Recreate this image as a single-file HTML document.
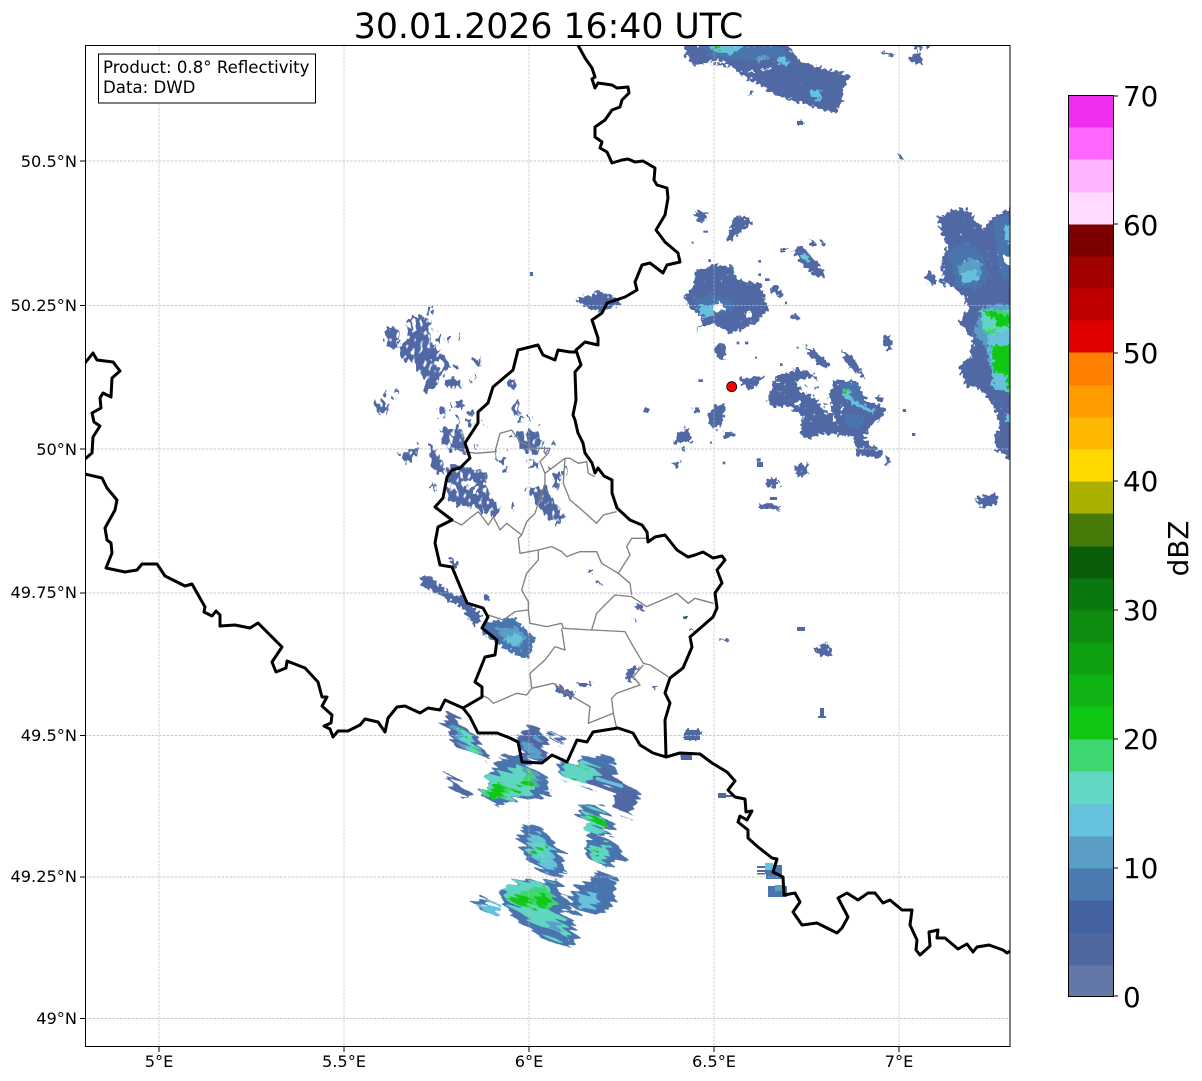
<!DOCTYPE html>
<html><head><meta charset="utf-8"><style>
html,body{margin:0;padding:0;background:#fff}
svg{display:block}
text{font-family:"DejaVu Sans",sans-serif;fill:#000}
.b{fill:#5068a3}.m{fill:#4a74ae}.l{fill:#5a9ec6}.c{fill:#66c2dc}.t{fill:#60d6c2}.g{fill:#3ed66e}.G{fill:#10c814}.w{fill:#fff}
.s{stroke:#5068a3;fill:none}
</style></head><body>
<svg xmlns="http://www.w3.org/2000/svg" width="1202" height="1081" viewBox="0 0 1202 1081">
<rect width="1202" height="1081" fill="#fff"/>
<defs>
<clipPath id="ax"><rect x="85.5" y="45.5" width="924.5" height="1001"/></clipPath>
<filter id="rough" filterUnits="userSpaceOnUse" x="0" y="0" width="1202" height="1081" color-interpolation-filters="sRGB">
<feTurbulence type="fractalNoise" baseFrequency=".3" numOctaves="1" seed="4" result="n"/>
<feDisplacementMap in="SourceGraphic" in2="n" scale="10" xChannelSelector="R" yChannelSelector="G" result="d"/>
<feColorMatrix in="n" type="matrix" values="0 0 0 0 0 0 0 0 0 0 0 0 0 0 0 8 0 0 0 -1.2" result="a"/>
<feComposite in="d" in2="a" operator="in"/>
</filter>
<filter id="scatter" filterUnits="userSpaceOnUse" x="0" y="0" width="1202" height="1081" color-interpolation-filters="sRGB">
<feTurbulence type="fractalNoise" baseFrequency=".25 .16" numOctaves="1" seed="9" result="n"/>
<feDisplacementMap in="SourceGraphic" in2="n" scale="14" xChannelSelector="R" yChannelSelector="G" result="d"/>
<feColorMatrix in="n" type="matrix" values="0 0 0 0 0 0 0 0 0 0 0 0 0 0 0 9 0 0 0 -2.8" result="a"/>
<feComposite in="d" in2="a" operator="in"/>
</filter>
<filter id="streak" filterUnits="userSpaceOnUse" x="-600" y="-600" width="2600" height="2600" color-interpolation-filters="sRGB">
<feTurbulence type="fractalNoise" baseFrequency=".025 .28" numOctaves="1" seed="3" result="n"/>
<feDisplacementMap in="SourceGraphic" in2="n" scale="22" xChannelSelector="R" yChannelSelector="A"/>
</filter>
</defs>
<g clip-path="url(#ax)">

<!-- top swath -->
<g filter="url(#rough)">
<g transform="translate(680,40) scale(.3333)">
<polygon class="b" points="15,15 320,15 370,70 515,105 490,145 485,185 470,220 310,175 210,120 150,80 90,70 40,75 15,45"/>
<polygon class="m" points="60,15 300,15 340,70 270,60 180,60 90,50"/>
<polygon class="c" points="85,15 190,15 155,45 100,30"/><polygon class="c" points="300,50 330,65 320,80 290,65"/><polygon class="l" points="225,55 260,40 265,55 235,70"/>
<polygon class="c" points="390,150 420,150 420,185 390,170"/><polygon class="G" points="100,15 120,15 120,28 100,25"/>
<rect x="355" y="244" width="13" height="11" class="b"/>
<polygon class="b" points="605,35 645,45 640,55 608,40"/><polygon class="b" points="690,50 715,40 730,60 715,75 685,60"/><polygon class="b" points="695,15 725,15 715,35"/><polygon class="b" points="735,15 750,15 745,25"/>
<rect x="205" y="160" width="14" height="4" class="b"/>
<rect x="85" y="63" width="50" height="6" class="w"/><rect x="240" y="85" width="32" height="4" class="w"/><rect x="205" y="90" width="20" height="5" class="w"/>
</g>
</g>
<rect x="797" y="121" width="6" height="4" class="b"/>
<polygon class="b" points="897,153 901,155 904,160 900,159"/>

<!-- north-centre / east radar cells -->
<g filter="url(#rough)">
<polygon class="b" points="575,300 585,296 600,292 612,296 622,302 612,307 600,312 585,307"/>
<g transform="translate(660,200) scale(.3333)">
<polygon class="b" points="70,295 100,260 105,210 170,195 220,200 235,240 300,250 325,325 290,370 210,400 170,375 130,375 110,395 130,355 100,335"/>
<polygon class="m" points="100,300 150,280 220,300 225,320 190,340 150,350 120,345"/>
<polygon class="c" points="110,325 150,310 170,330 150,350 130,350"/>
<polygon class="w" points="160,320 180,305 195,330 165,335"/><circle cx="265" cy="345" r="8" class="w"/>
<polygon class="b" points="200,120 215,65 235,45 280,65 250,85 215,125"/><polygon class="b" points="105,35 145,35 135,70 110,60"/>
<polygon class="b" points="400,150 425,135 490,210 495,235 460,225 420,185"/><polygon class="c" points="420,160 445,165 445,190 425,175"/><circle cx="435" cy="172" r="5" class="t"/>
<polygon class="b" points="450,115 470,130 460,145 450,130"/><polygon class="b" points="475,112 497,130 490,138"/>
<polygon class="b" points="330,270 345,250 368,285 360,295"/><rect x="365" y="147" width="14" height="8" class="b"/>
<polygon class="b" points="395,345 405,342 422,358 400,360"/>
<polygon class="b" points="160,455 175,428 195,440 195,485 175,475"/>
<polygon class="b" points="320,600 345,530 410,505 465,525 500,600 525,540 590,545 620,600 680,625 670,650 630,680 610,720 670,760 660,775 590,765 580,710 490,700 440,720 420,700 430,650 390,620 340,620"/>
<polygon class="w" points="410,540 460,530 510,590 520,640 500,640 460,590 420,570"/>
<circle cx="415" cy="612" r="8" class="w"/>
<g class="w"><rect x="350" y="540" width="8" height="8"/><rect x="380" y="515" width="8" height="8"/><rect x="520" y="650" width="8" height="8"/><rect x="540" y="620" width="10" height="8"/><rect x="360" y="570" width="6" height="6"/><rect x="630" y="700" width="8" height="8"/><rect x="600" y="740" width="10" height="6"/></g>
<g class="b"><rect x="435" y="555" width="6" height="6"/><rect x="465" y="560" width="6" height="6"/><rect x="490" y="610" width="6" height="6"/><rect x="470" y="600" width="6" height="6"/><rect x="510" y="610" width="5" height="5"/><rect x="520" y="590" width="5" height="5"/></g>
<polygon class="m" points="550,640 620,650 600,690 560,680"/>
<polygon class="m" points="530,550 590,545 600,590 620,600 600,610 560,590"/>
<polygon class="c" points="548,565 570,570 575,595 610,615 650,630 640,640 590,620 550,590"/><circle cx="557" cy="575" r="5" class="G"/>
<polygon class="b" points="545,450 580,470 615,535 590,520 560,490"/><polygon class="b" points="435,435 460,450 515,495 490,505 450,470"/>
<polygon class="b" points="140,650 165,615 195,610 190,660 170,690 145,670"/>
<polygon class="b" points="235,535 310,530 290,560 270,570 245,550"/>
<polygon class="b" points="670,420 680,405 697,430 690,450 675,440"/>
<polygon class="b" points="190,690 225,700 215,715 190,710"/><polygon class="b" points="72,680 95,720 70,725"/><polygon class="b" points="40,722 60,716 55,735 45,735"/><polygon class="b" points="30,790 60,785 50,805"/>
<polygon class="b" points="405,800 440,795 440,810 405,810"/><polygon class="b" points="675,785 690,785 685,800"/>
<polygon class="b" points="648,590 670,590 672,600 650,600"/><polygon class="b" points="100,630 120,620 115,645"/>
<polygon class="b" points="60,745 75,742 72,755"/>
</g>
<polygon points="678,432 688,428 692,442 676,442" class="b"/>
<polygon points="796,466 806,463 809,473 802,478 796,474" class="b"/>
<polygon points="884,337 890,334 893,349 887,351" class="b"/>
<polygon points="765,480 778,478 780,485 767,488" class="b"/><polygon points="758,503 778,505 780,510 760,508" class="b"/>
<polygon points="976,497 996,494 998,503 985,507 977,505" class="b"/>
<polygon points="814,650 828,642 832,656 818,655" class="b"/>
<polygon points="912,58 920,52 922,62 915,66" class="b"/>
</g>
<g transform="translate(660,200) scale(.3333)" class="b"><rect x="145" y="178" width="8" height="8"/><rect x="95" y="125" width="6" height="6"/><rect x="295" y="180" width="8" height="8"/><rect x="375" y="305" width="6" height="8"/><rect x="290" y="775" width="12" height="10"/><rect x="230" y="425" width="8" height="8"/><rect x="255" y="425" width="10" height="8"/><rect x="285" y="470" width="6" height="6"/><rect x="115" y="538" width="14" height="8"/><rect x="150" y="725" width="6" height="6"/><rect x="188" y="785" width="8" height="8"/><rect x="410" y="440" width="6" height="6"/><rect x="360" y="490" width="8" height="8"/><rect x="295" y="220" width="8" height="8"/><rect x="315" y="235" width="14" height="8"/><rect x="130" y="92" width="14" height="6"/></g>

<!-- small scattered cells -->
<g class="b">
<rect x="530" y="272" width="3" height="4"/>
<polygon points="645,407 650,409 648,413 643,412"/>
<rect x="757" y="462" width="6" height="5"/><rect x="770" y="497" width="7" height="3"/>
<polygon points="686,730 700,730 700,740 684,740"/>
<polygon points="680,753 692,752 692,760 681,760"/>
<polygon points="718,793 726,793 726,795 733,795 733,797 726,797 726,798 718,798"/>
<rect x="797" y="627" width="8" height="4"/>
<rect x="820" y="708" width="4" height="8"/><rect x="818" y="716" width="8" height="2"/>
<rect x="885" y="43" width="5" height="3"/>
<rect x="903" y="409" width="3" height="3"/><rect x="912" y="433" width="3" height="3"/>
<polygon points="885,455 890,458 888,465"/>
</g>
<g class="m"><rect x="765" y="865" width="17" height="9"/><rect x="766" y="874" width="16" height="5"/><rect x="768" y="886" width="19" height="11"/></g>
<rect x="757" y="866" width="8" height="2" class="b"/><rect x="757" y="870" width="8" height="2" class="b"/><rect x="757" y="873" width="8" height="1.5" class="b"/>
<rect x="765" y="863" width="8" height="7" class="c"/><rect x="775" y="885" width="8" height="6" class="l"/>

<!-- west scatter -->
<g filter="url(#scatter)">
<g transform="translate(370,300) scale(.3333)">
<g class="b">
<rect x="48" y="85" width="38" height="55"/><rect x="172" y="20" width="16" height="20"/>
<polygon points="115,60 140,45 180,60 190,130 235,180 240,200 215,230 190,270 170,280 165,235 130,190 105,180 95,170 90,130 115,120"/>
<rect x="205" y="100" width="12" height="30"/><rect x="230" y="112" width="10" height="16"/><rect x="264" y="104" width="6" height="16"/>
<rect x="310" y="170" width="20" height="28"/><rect x="248" y="190" width="16" height="16"/><rect x="228" y="236" width="44" height="28"/><rect x="312" y="222" width="6" height="14"/>
<polygon points="10,300 55,305 50,355 40,345 15,325"/><rect x="42" y="268" width="6" height="16"/><rect x="80" y="268" width="6" height="14"/><rect x="66" y="288" width="8" height="14"/>
<polygon points="85,460 150,435 130,490 90,475"/>
<polygon points="175,430 215,470 225,525 190,515"/>
<polygon points="210,385 270,380 285,420 290,460 270,460 220,440"/>
<polygon points="228,500 290,500 340,515 350,565 390,630 370,650 310,620 270,620 235,600"/>
<polygon points="205,325 228,325 222,355 210,355"/>
<rect x="240" y="310" width="8" height="14"/><rect x="258" y="305" width="24" height="18"/><rect x="290" y="332" width="22" height="12"/><rect x="295" y="362" width="12" height="12"/><rect x="340" y="370" width="6" height="10"/>
<polygon points="410,250 430,232 442,270 420,268"/>
<polygon points="430,325 445,300 450,345 435,352"/>
<polygon points="445,352 462,352 452,372"/><rect x="478" y="350" width="5" height="14"/><rect x="505" y="372" width="7" height="10"/>
<polygon points="440,400 490,390 525,430 495,465 450,445"/>
<rect x="420" y="403" width="18" height="8"/><rect x="545" y="430" width="10" height="14"/><rect x="376" y="452" width="6" height="26"/><rect x="405" y="445" width="8" height="10"/><rect x="385" y="475" width="20" height="14"/><rect x="406" y="500" width="5" height="20"/><rect x="470" y="488" width="32" height="14"/>
<rect x="525" y="445" width="8" height="10"/><rect x="535" y="505" width="6" height="10"/>
<polygon points="470,565 530,560 560,620 585,650 560,680 510,630"/>
<polygon points="550,520 570,515 570,560 550,565"/><polygon points="575,510 590,505 590,530 575,530"/>
<polygon points="178,545 196,562 192,572"/><rect x="425" y="615" width="8" height="10"/>
<rect x="312" y="435" width="8" height="16"/><rect x="325" y="522" width="26" height="10"/><rect x="262" y="350" width="4" height="26"/><rect x="166" y="240" width="4" height="40"/><rect x="300" y="236" width="4" height="12"/>
</g>
<g class="w"><rect x="190" y="180" width="30" height="20"/><rect x="180" y="90" width="8" height="35"/><rect x="280" y="540" width="28" height="22"/><rect x="240" y="550" width="20" height="18"/><rect x="315" y="560" width="10" height="20"/><rect x="130" y="60" width="8" height="40"/><rect x="205" y="235" width="6" height="25"/><rect x="238" y="410" width="12" height="20"/></g>
</g>
</g>

<!-- Luxembourg interior and cluster -->
<g filter="url(#rough)">
<g transform="translate(420,420) scale(.3333)">
<polygon class="b" points="5,468 30,470 90,520 125,530 190,590 165,620 130,570 70,530 0,495"/>
<polygon class="b" points="85,420 100,415 115,435 100,445"/><polygon class="b" points="190,530 200,525 210,540 198,542"/>
<polygon class="m" points="190,610 280,590 345,655 325,720 280,700 230,670 185,640"/>
<polygon class="l" points="225,625 290,620 320,650 300,685 260,670"/>
<polygon class="c" points="250,655 295,640 310,660 280,680"/>
<polygon class="b" points="400,790 465,820 455,840 410,815"/><polygon class="b" points="465,790 520,788 490,805"/>
<polygon class="b" points="622,745 660,738 640,760 635,785 618,782"/>
<g class="b"><rect x="505" y="448" width="16" height="10"/><polygon points="530,482 552,492 548,498 528,488"/><polygon points="645,548 670,555 668,570 650,565"/><rect x="640" y="600" width="10" height="8"/><rect x="808" y="628" width="16" height="5"/><polygon points="898,656 924,654 924,660 898,662"/><rect x="698" y="798" width="14" height="6"/><polygon points="795,930 845,932 830,960 795,955"/></g>
<rect x="789" y="588" width="12" height="8" fill="#2e6a50"/>
</g>
</g>

<!-- south clusters -->
<g transform="rotate(20 530 850)">
<g filter="url(#streak)">
<g transform="rotate(-20 530 850)">
<g transform="translate(430,700) scale(.3333)">
<g stroke="#4b6ba8" stroke-width="9" fill="none">
<path d="M215,172L270,190M150,282L215,315M265,280L365,285M210,185L250,205M288,290L340,290M360,100L410,125M358,115L395,135M380,195L420,212M340,250L360,270M580,270L625,282M590,325L612,350M550,305L615,320M270,380L320,420M285,400L330,425M280,430L330,455M285,478L340,500M380,515L405,525M375,465L398,475M460,450L485,462M530,465L580,482M490,520L565,545M460,560L555,590M230,575L215,585M210,575L240,600M270,660L300,680M340,700L440,710M360,570L420,600M400,620L515,640M135,595L165,610M155,622L180,630M50,45L80,60M170,175L185,188"/>
</g>
<polygon class="b" points="40,65 60,40 100,70 140,110 180,185 130,160 90,140 50,90"/>
<polygon class="l" points="60,70 100,80 160,170 120,155 80,115"/>
<polygon class="t" points="85,80 110,90 150,150 130,160 95,120"/>
<polygon class="G" points="90,82 103,88 100,98 92,94"/><polygon class="g" points="125,148 140,150 143,165 128,160"/>
<polygon class="b" points="38,225 50,222 120,280 110,295 70,260"/>
<polygon class="b" points="260,105 300,85 330,100 360,160 350,180 280,175"/><polygon class="l" points="275,125 320,120 345,170 295,170"/>
<polygon class="m" points="215,175 270,165 340,215 360,270 300,300 210,315 150,285 180,235"/>
<polygon class="t" points="180,235 270,190 330,230 300,280 240,310 160,280"/>
<polygon class="l" points="270,190 330,230 320,260 280,230"/>
<polygon class="g" points="160,270 215,250 270,255 250,280 190,300"/><polygon class="G" points="180,260 215,248 225,275 190,300 178,290"/><polygon class="G" points="245,255 272,255 265,280 245,275"/>
<polygon class="g" points="265,235 300,200 310,250"/><polygon class="G" points="268,238 300,232 305,255 275,250"/>
<polygon class="m" points="380,200 510,165 545,180 560,230 625,280 610,350 545,320 555,280 490,260 400,240"/>
<polygon class="b" points="490,200 560,230 625,280 610,350 545,320 555,280 480,250"/>
<polygon class="t" points="395,205 460,180 510,210 490,235 460,255 395,240"/>
<rect x="500" y="240" width="80" height="18" class="c" transform="rotate(20 540 250)"/>
<polygon class="g" points="425,195 470,200 465,210 425,205"/><polygon class="G" points="412,235 440,230 432,250"/>
<polygon class="m" points="450,320 500,310 555,370 540,400 490,410 445,345"/>
<polygon class="t" points="455,320 530,350 520,400 470,395"/><polygon class="G" points="465,350 510,345 530,385 490,375"/>
<polygon class="m" points="490,405 540,410 580,480 530,505 470,470 460,450"/>
<polygon class="t" points="470,440 530,430 535,480 490,485"/><polygon class="G" points="485,445 510,450 505,470"/>
<polygon class="m" points="270,375 330,375 365,405 395,465 405,525 360,525 285,480 275,430"/>
<polygon class="c" points="295,405 340,405 370,460 385,510 350,510 300,460"/><polygon class="t" points="300,430 345,430 365,480 320,475"/>
<rect x="320" y="445" width="25" height="22" class="G"/>
<polygon class="m" points="410,610 450,560 490,530 500,510 565,535 555,595 520,640 430,640"/>
<polygon class="c" points="440,590 500,575 500,615 450,630"/>
<polygon class="m" points="210,575 285,535 390,545 395,600 420,650 440,700 430,745 350,715 270,670 220,620"/>
<polygon class="t" points="220,560 320,540 360,560 370,630 410,670 415,720 330,690 270,640 230,610"/>
<polygon class="l" points="355,660 390,665 390,705 355,695"/>
<polygon class="g" points="230,590 300,570 340,555 360,580 370,630 320,620 270,610"/>
<polygon class="G" points="232,590 290,590 320,610 265,612"/>
<polygon class="G" points="320,585 350,585 355,625 320,625"/>
<polygon class="m" points="135,592 145,590 170,610 160,615"/>
<polygon class="c" points="160,605 215,625 205,645 155,620"/>
</g>
</g>
</g>
</g>

<!-- east edge -->
<g filter="url(#rough)">
<g transform="translate(900,190) scale(.3333)">
<polygon class="b" points="110,80 120,82 160,60 200,55 250,120 270,90 320,60 345,35 345,820 290,780 280,735 300,720 285,650 255,620 240,595 200,590 175,530 210,500 220,450 175,395 205,360 195,320 130,270 125,210 140,170"/>
<polygon class="b" points="75,260 90,240 110,275 100,290"/><polygon class="m" points="115,265 130,265 140,290 125,285"/>
<polygon class="m" points="140,190 200,150 250,200 270,260 230,300 170,290"/>
<polygon class="m" points="280,90 345,60 345,300 300,250"/>
<polygon class="l" points="170,230 215,200 245,220 240,270 190,280"/>
<polygon class="c" points="180,250 225,240 240,270 190,280"/>
<polygon class="c" points="310,100 345,110 345,180 315,150"/>
<polygon class="w" points="310,200 345,195 345,228 315,220"/>
<polygon class="l" points="220,430 250,350 345,340 345,610 280,600 260,470"/>
<polygon class="c" points="262,420 345,410 345,610 280,600"/>
<polygon class="t" points="240,360 345,360 345,420 250,430"/>
<polygon class="g" points="245,365 300,360 345,370 345,410 290,410 290,380"/>
<polygon class="G" points="245,365 290,365 310,375 345,385 345,405 290,410 285,385"/>
<polygon class="g" points="240,425 290,415 285,435"/>
<polygon class="G" points="275,470 345,460 345,600 320,590 320,555 280,545"/>
<polygon class="c" points="318,670 345,670 345,700 320,695"/>
</g>
</g>
<g transform="translate(900,190) scale(.3333)"><rect x="8" y="658" width="6" height="7" class="b"/><rect x="40" y="730" width="6" height="7" class="b"/></g>

<!-- grid -->
<g stroke="#b8b8b8" stroke-width=".65" stroke-dasharray="2.6 1.3" fill="none">
<path d="M159,45V1047M344,45V1047M529,45V1047M714,45V1047M899,45V1047"/>
<path d="M85,161H1010M85,305.5H1010M85,449H1010M85,593H1010M85,735.5H1010M85,877H1010M85,1018.5H1010"/>
</g>

<!-- admin borders -->
<g transform="translate(420,420) scale(.3333)" fill="none" stroke="#808080" stroke-width="4" stroke-linejoin="round">
<path d="M95,300L125,315L155,290L175,275L205,315L220,290L240,330L260,310L305,345L320,305L345,280L375,190L375,160L360,125L385,100L390,85L345,85L300,65L275,30L240,40L225,95L170,100L130,95"/>
<path d="M375,160L435,115L430,190L450,240L480,265L530,310L550,285L590,275"/>
<path d="M435,115L450,115L475,130L500,125L505,160L525,170"/>
<path d="M305,345L295,355L300,400L355,390L395,380L425,395L440,410L480,395L530,395L545,430L595,460L630,490L635,525"/>
<path d="M595,460L630,405L620,380L635,355L680,355"/>
<path d="M355,390L355,420L320,460L305,510L325,545L325,570L285,575L250,600L205,585"/>
<path d="M325,570L330,610L380,620L425,610L430,625L515,630L530,580L585,525L635,530L680,560L750,530L770,520L805,550L825,535L880,550"/>
<path d="M515,630L615,635L640,680L670,730L690,735L745,770"/>
<path d="M425,625L435,690L405,680L375,720L330,760L335,805L400,790L450,825L510,860L505,910L580,880L590,925"/>
<path d="M335,805L320,825L290,820L220,850L205,835L185,825"/>
<path d="M580,880L575,835L590,820L660,795L640,770L670,735"/>
</g>

<!-- country borders -->
<g fill="none" stroke="#000" stroke-width="3" stroke-linejoin="round" stroke-linecap="round">
<path d="M578,45L585,58L592,68L595,77L592,79L595,88L598,83L612,85L617,88L628,87L629,93L622,100L620,107L612,110L605,120L595,127L595,137L602,142L600,148L607,152L612,163L622,160L628,159L635,162L643,161L655,168L654,180L657,185L667,188L668,198L665,215L656,230L665,242L678,253L680,262L667,265L663,273L650,263L642,265L635,282L637,290L625,297L607,303L602,313L592,320L598,338L598,345L585,342L576,350L581,365L575,372L576,400L573,415L575,420L578,433L583,443L585,453L592,463L595,473L598,468L604,476L612,480L612,493L617,508L630,520L642,525L647,532L648,542L655,537L665,535L677,550L688,557L695,555L703,552L713,558L722,556L725,560L717,570L722,583L715,593L717,608L713,617L690,637L692,647L683,668L670,678L665,693L670,703L665,720L666,757"/>
<path d="M570,352L558,350L555,360L543,355L538,345L518,350L513,370L493,387L488,403L478,412L478,423L465,443L470,458L460,468L452,470L447,477L443,498L435,507L452,520L438,527L435,543L440,565L452,567L467,603L483,608L488,617L482,628L497,640L495,655L485,657L475,682L482,687L482,697L463,708L445,700L440,710L428,708L420,713L405,706L397,707L388,718L385,732L378,722L365,719L360,725L348,731L338,731L333,737L330,729L324,726L331,723L332,715L322,706L327,697L322,697L318,682L305,668L287,661L286,668L276,672L272,662L282,647L258,623L250,628L235,625L220,626L220,615L216,611L212,616L204,612L205,607L192,584L185,586L165,576L157,564L142,564L137,570L125,572L106,568L112,553L111,543L107,540L105,528L115,510L117,500L107,488L102,478L85,474"/>
<path d="M576,352L570,352"/>
<path d="M463,708L470,717L478,733L497,733L510,738L518,742L522,762L542,763L552,755L567,762L577,740L587,742L593,732L618,728L633,733L640,745L653,753L666,757L680,753L700,754L712,763L727,772L735,781L728,790L735,797L745,799L746,812L752,811L747,820L740,816L738,822L748,830L748,838L758,847L772,858L777,859L773,872L783,877L784,895L795,893L800,902L793,912L802,925L817,923L837,933L842,928L848,917L838,898L847,893L858,900L868,893L875,893L883,903L890,900L902,910L912,910L910,925L917,940L916,950L920,955L930,946L929,932L938,930L937,938L945,938L958,949L967,944L973,952L977,947L989,945L1003,950L1007,953L1012,950"/>
<path d="M85,363L93,353L97,360L113,362L120,371L112,378L111,397L103,393L100,398L101,408L92,413L94,422L100,426L93,437L92,453L85,459"/>
</g>

<circle cx="731.7" cy="386.7" r="5" fill="#f00" stroke="#000" stroke-width=".8"/>
</g>

<rect x="85.5" y="45.5" width="924.5" height="1001" fill="none" stroke="#000" stroke-width="1"/>

<!-- info box -->
<rect x="98.5" y="54" width="217" height="49" fill="#fff" stroke="#000" stroke-width="1"/>
<text x="103" y="73" font-size="16.6">Product: 0.8° Reflectivity</text>
<text x="103" y="93" font-size="16.6">Data: DWD</text>

<!-- title -->
<text x="548.5" y="38" font-size="34.7" text-anchor="middle">30.01.2026 16:40 UTC</text>

<!-- axis ticks -->
<g stroke="#000" stroke-width="1"><path d="M159,1047v5M344,1047v5M529,1047v5M714,1047v5M899,1047v5M80,161h5M80,305.5h5M80,449h5M80,593h5M80,735.5h5M80,877h5M80,1018.5h5"/></g>
<g font-size="16.2" text-anchor="middle">
<text x="159" y="1067">5°E</text><text x="344" y="1067">5.5°E</text><text x="529" y="1067">6°E</text><text x="714" y="1067">6.5°E</text><text x="899" y="1067">7°E</text>
</g>
<g font-size="16.2" text-anchor="end">
<text x="77" y="167">50.5°N</text><text x="77" y="311">50.25°N</text><text x="77" y="455">50°N</text><text x="77" y="598">49.75°N</text><text x="77" y="741">49.5°N</text><text x="77" y="882">49.25°N</text><text x="77" y="1024">49°N</text>
</g>

<!-- colorbar -->
<g>
<rect x="1068" y="965" width="45" height="32" fill="#6478a8"/><rect x="1068" y="933" width="45" height="32.5" fill="#5068a0"/><rect x="1068" y="900" width="45" height="33.5" fill="#4462a2"/><rect x="1068" y="868" width="45" height="32.5" fill="#4a7ab0"/>
<rect x="1068" y="836" width="45" height="32.5" fill="#5a9ec6"/><rect x="1068" y="803" width="45" height="33.5" fill="#66c2dc"/><rect x="1068" y="771" width="45" height="32.5" fill="#60d8c4"/><rect x="1068" y="739" width="45" height="32.5" fill="#3ed66e"/>
<rect x="1068" y="706" width="45" height="33.5" fill="#10c814"/><rect x="1068" y="674" width="45" height="32.5" fill="#10b414"/><rect x="1068" y="642" width="45" height="32.5" fill="#0ea010"/><rect x="1068" y="610" width="45" height="32.5" fill="#0e8c10"/>
<rect x="1068" y="578" width="45" height="32.5" fill="#0a780e"/><rect x="1068" y="546" width="45" height="32.5" fill="#0a5e0a"/><rect x="1068" y="513" width="45" height="33.5" fill="#487a08"/><rect x="1068" y="481" width="45" height="32.5" fill="#aab000"/>
<rect x="1068" y="449" width="45" height="32.5" fill="#ffd800"/><rect x="1068" y="417" width="45" height="32.5" fill="#ffb800"/><rect x="1068" y="385" width="45" height="32.5" fill="#ff9c00"/><rect x="1068" y="352" width="45" height="33.5" fill="#ff8000"/>
<rect x="1068" y="320" width="45" height="32.5" fill="#e00000"/><rect x="1068" y="288" width="45" height="32.5" fill="#c00000"/><rect x="1068" y="256" width="45" height="32.5" fill="#a00000"/><rect x="1068" y="224" width="45" height="32.5" fill="#7c0000"/>
<rect x="1068" y="192" width="45" height="32.5" fill="#ffdcff"/><rect x="1068" y="159" width="45" height="33.5" fill="#ffb4ff"/><rect x="1068" y="127" width="45" height="32.5" fill="#ff68ff"/><rect x="1068" y="95" width="45" height="32.5" fill="#ee30ee"/>
</g>
<rect x="1068.5" y="95.5" width="45" height="901" fill="none" stroke="#000" stroke-width="1"/>
<path d="M1113,96h5M1113,224h5M1113,353h5M1113,481h5M1113,610h5M1113,739h5M1113,868h5M1113,996h5" stroke="#000" stroke-width="1"/>
<g font-size="27.8">
<text x="1123" y="106">70</text><text x="1123" y="235">60</text><text x="1123" y="363">50</text><text x="1123" y="491">40</text><text x="1123" y="620">30</text><text x="1123" y="749">20</text><text x="1123" y="878">10</text><text x="1123" y="1007">0</text>
</g>
<text transform="translate(1188,548.5) rotate(-90)" font-size="27.8" text-anchor="middle">dBZ</text>
</svg>
</body></html>
